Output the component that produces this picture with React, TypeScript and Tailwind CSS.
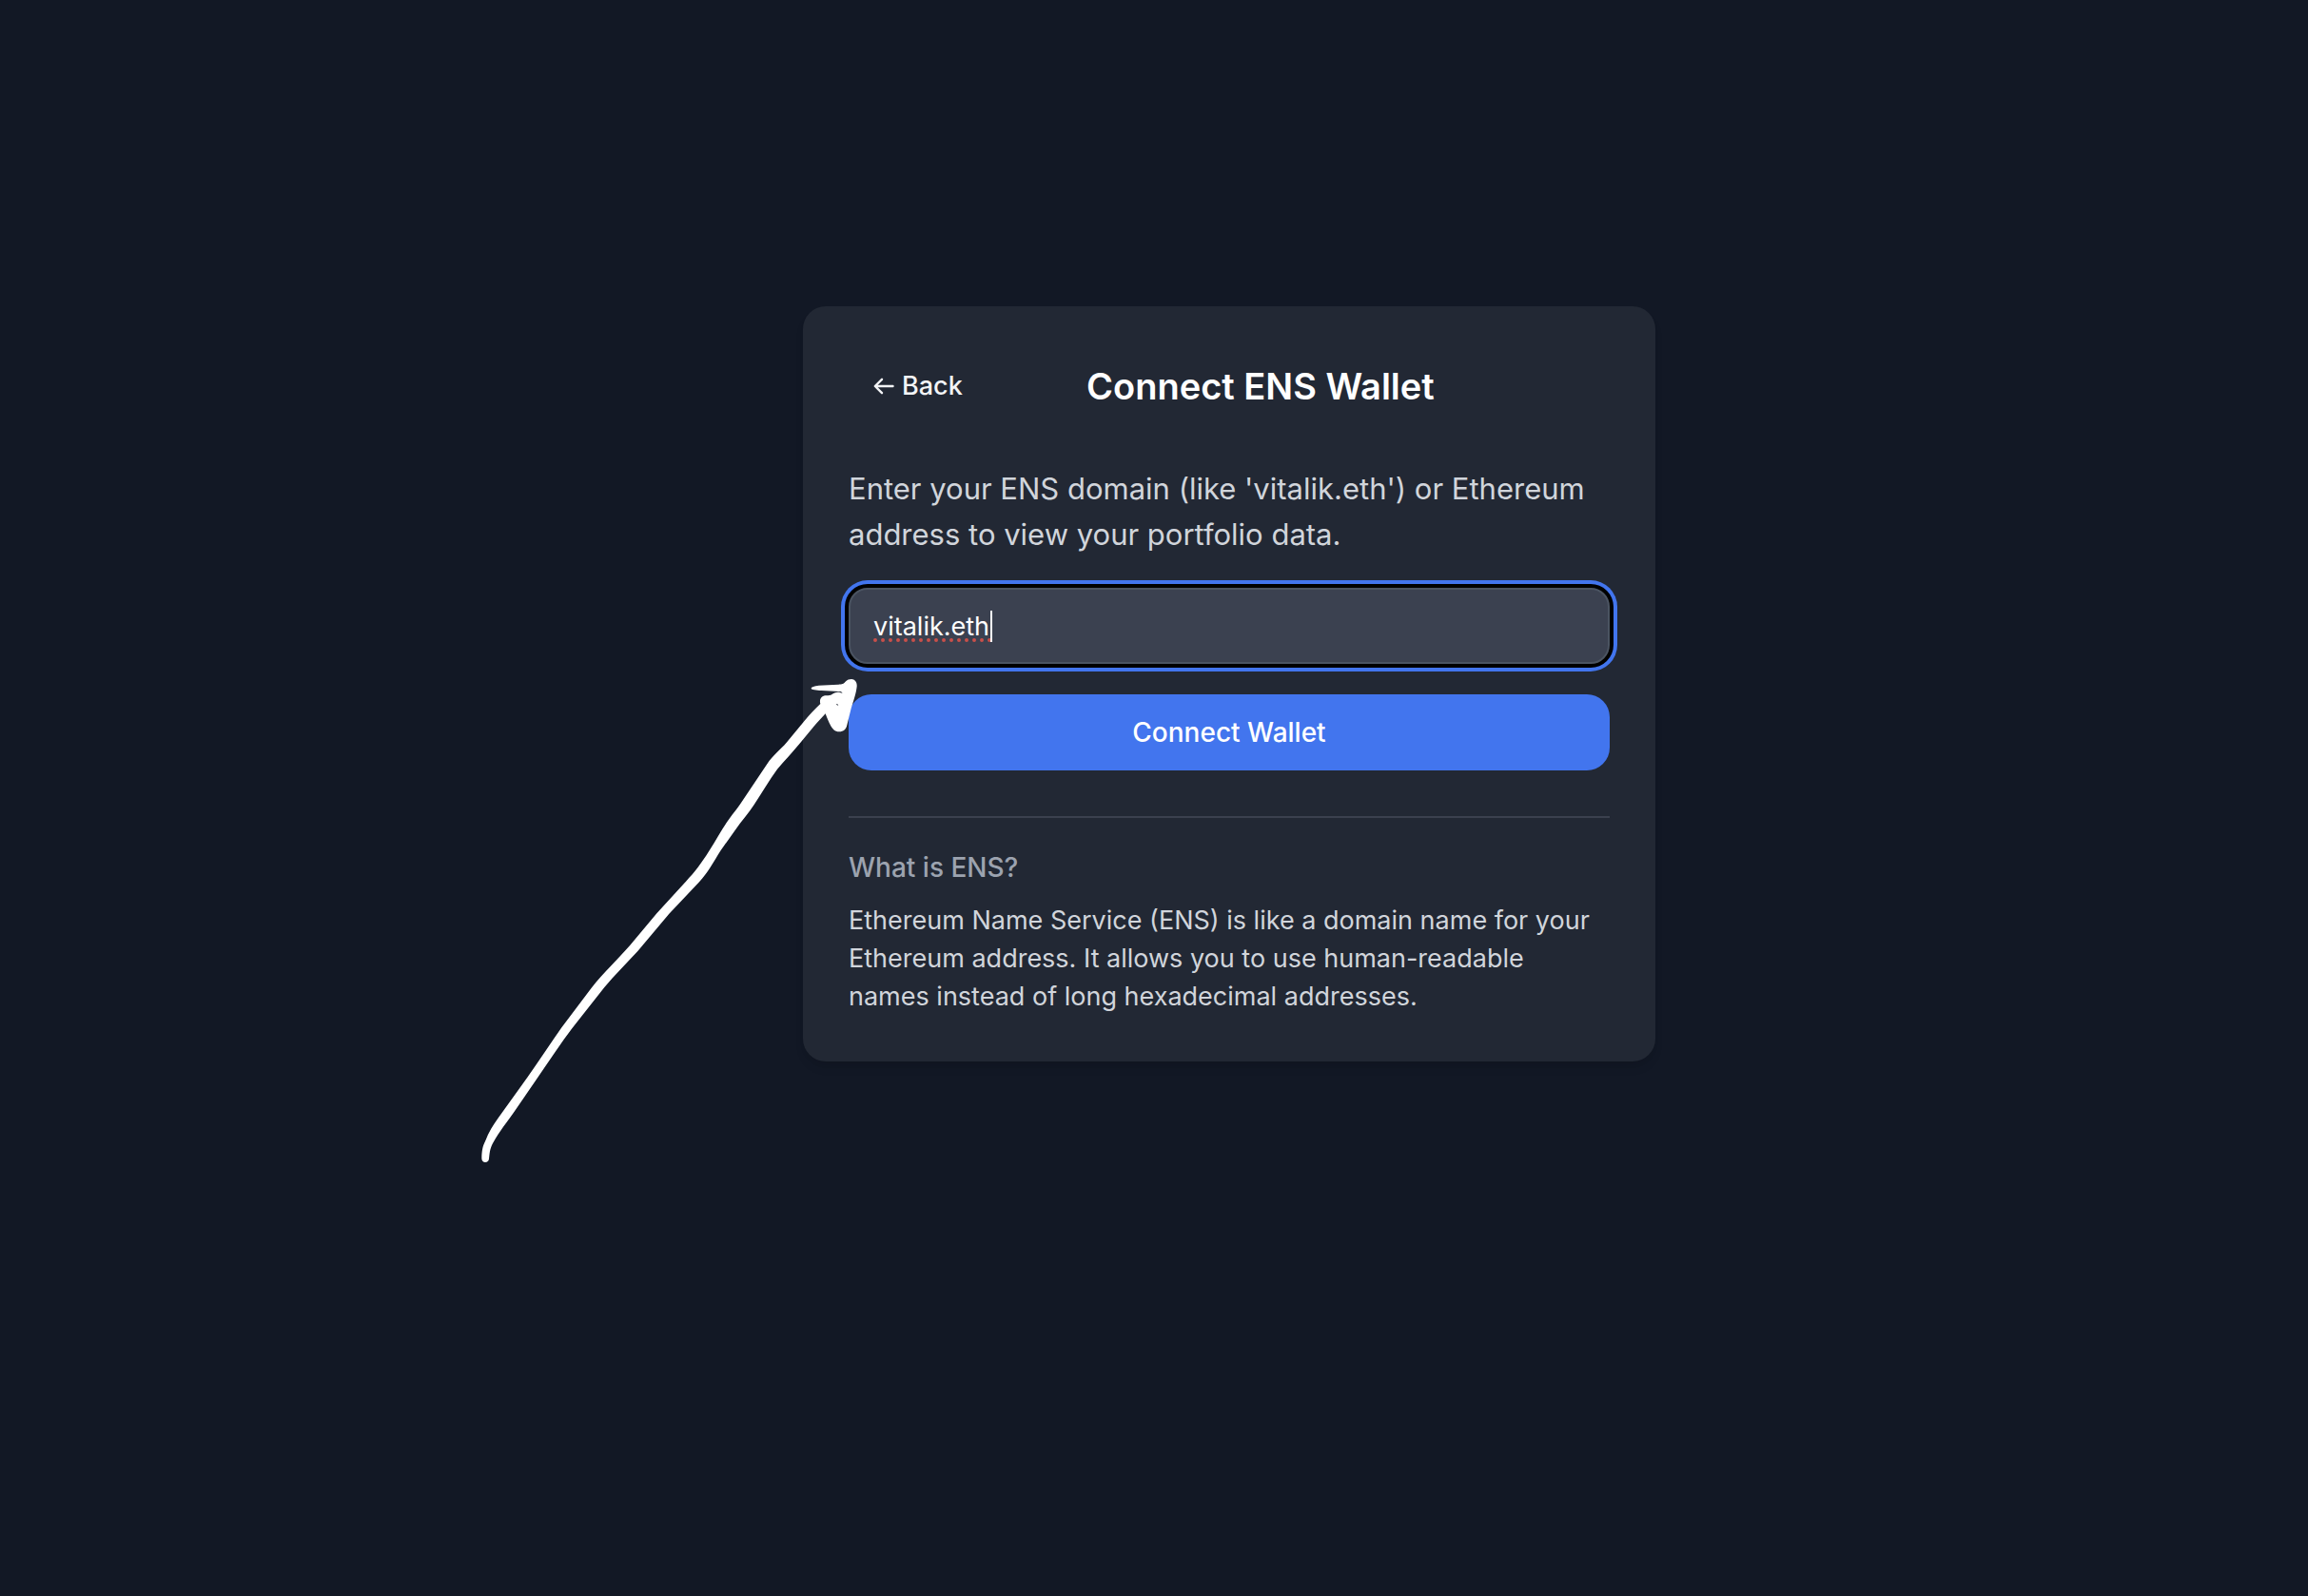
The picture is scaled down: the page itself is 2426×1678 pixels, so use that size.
import { useState } from "react";

function BackArrow() {
  return (
    <svg
      viewBox="0 0 22 18"
      className="h-[18px] w-[22px]"
      fill="none"
      stroke="currentColor"
      strokeWidth="2.4"
      strokeLinecap="round"
      strokeLinejoin="round"
      aria-hidden="true"
    >
      <path d="M20.5 9H2M9 1.8L1.8 9L9 16.2" />
    </svg>
  );
}

function SpellingMark() {
  return (
    <svg
      viewBox="0 0 126 34"
      className="pointer-events-none absolute top-6 left-[26px] h-[34px] w-[126px]"
      aria-hidden="true"
    >
      <path
        d="M2 31H123"
        stroke="#c8504a"
        strokeWidth="4"
        strokeLinecap="round"
        strokeDasharray="0 8"
      />
      <rect x="123" y="0" width="2" height="33" fill="#ffffff" />
    </svg>
  );
}

function HandDrawnArrow() {
  return (
    <svg
      viewBox="0 0 1260 1590"
      className="pointer-events-none absolute top-[378px] left-[-354px] h-[530px] w-[420px]"
      fill="#ffffff"
      aria-hidden="true"
    >
      <path
        fillRule="evenodd"
        d="M49 1555C49 1530 52 1515 60 1500C70 1472 86 1448 102 1425L193 1298C230 1245 266 1190 300 1142L395 1016C430 972 466 938 500 900L517 881L601 781L693 680C722 650 742 622 765 586C790 546 808 512 830 482C842 466 852 454 863 438L950 308C966 284 990 266 1012 240L1064 177C1082 155 1098 139 1117 120C1113 106 1120 96 1132 94C1140 93 1144 94 1150 92C1158 86 1166 83 1172 83C1178 83 1184 85 1186 87C1186 83 1182 81 1176 81L1120 78C1104 77 1088 75 1088 71C1088 67 1100 63 1112 62L1174 59C1186 58 1190 57 1195 51C1202 44 1208 42 1215 42C1226 43 1233 51 1232 65C1230 87 1220 114 1214 134L1201 187C1198 201 1190 208 1176 208C1162 208 1156 200 1150 190C1142 176 1138 164 1133 151L1104 182L1053 244C1028 274 1004 300 981 326C956 360 934 398 908 438C890 466 868 490 850 516L803 582C778 622 762 652 735 682L640 782L541 900L460 986L436 1014L335 1142C300 1188 266 1240 230 1292L158 1397C130 1438 104 1468 84 1506C74 1524 74 1540 72 1555C71 1563 67 1566 60 1566C54 1566 50 1563 49 1555ZM1167 120L1169 124L1174 125L1171 121Z"
      />
    </svg>
  );
}

export default function App() {
  const [domain, setDomain] = useState("vitalik.eth");

  return (
    <main className="flex min-h-screen items-center justify-center bg-[#121825] pb-60 pl-[158px] font-['Inter',sans-serif] text-white">
      <section className="relative w-full max-w-4xl rounded-3xl bg-[#222834] p-12 shadow-[0_8px_12px_-2px_rgba(0,0,0,0.08),0_4px_8px_-4px_rgba(0,0,0,0.08)]">
        <header className="flex items-center">
          <button
            type="button"
            className="flex h-[72px] items-center gap-2 px-[26px] text-[27px] leading-10 font-medium text-[#f3f4f6]"
          >
            <BackArrow />
            Back
          </button>
          <h1 className="flex-1 text-center text-[38px] leading-[56px] font-semibold">
            Connect ENS Wallet
          </h1>
          <div className="w-20" />
        </header>

        <form className="mt-12 flex flex-col gap-8" onSubmit={(e) => e.preventDefault()}>
          <label htmlFor="domain" className="text-[31px] leading-[48px] text-[#d1d5db]">
            Enter your ENS domain (like 'vitalik.eth') or Ethereum address to view your portfolio
            data.
          </label>
          <div className="relative">
            <input
              id="domain"
              type="text"
              spellCheck={false}
              value={domain}
              onChange={(e) => setDomain(e.target.value)}
              className="block h-20 w-full rounded-[20px] border-2 border-[#4b5462] bg-[#3b4150] px-6 text-[27px] text-white shadow-[0_0_0_4px_#000000,0_0_0_8px_#4275ee] outline-none"
            />
            <SpellingMark />
          </div>
          <button
            type="submit"
            className="h-20 rounded-3xl bg-[#4275ee] text-[28px] leading-10 font-medium text-white"
          >
            Connect Wallet
          </button>
        </form>

        <div className="mt-12 border-t-2 border-[#3b404e] pt-8">
          <h2 className="mb-4 text-[28px] leading-10 font-medium text-[#9ca3af]">What is ENS?</h2>
          <p className="text-[27px] leading-10 text-[#d1d5db]">
            Ethereum Name Service (ENS) is like a domain name for your Ethereum address. It allows
            you to use human-readable names instead of long hexadecimal addresses.
          </p>
        </div>

        <HandDrawnArrow />
      </section>
    </main>
  );
}
